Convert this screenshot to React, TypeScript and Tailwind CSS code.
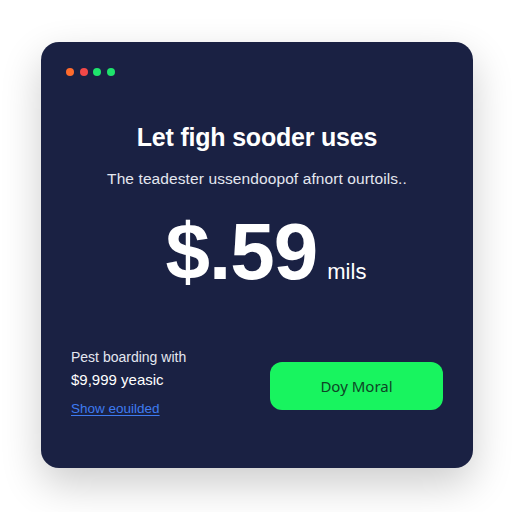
import React from "react"

const dots = ["bg-[#ff6b2c]", "bg-[#f34848]", "bg-[#1ee46c]", "bg-[#1ee46c]"]

export default function App() {
  return (
    <div className="w-[512px] h-[512px] bg-white flex items-start justify-center pt-[42px] pl-[2px] font-['Liberation_Sans',Arial,sans-serif]">
      <div className="w-[432px] h-[426px] rounded-[18px] bg-[#1a2143] shadow-[0_16px_40px_rgba(0,0,0,0.2)] flex flex-col px-[24px] pt-[26px]">
        <div className="flex gap-[5.5px] pl-[1px]">
          {dots.map((c, i) => (
            <span key={i} className={`w-[8px] h-[8px] rounded-full ${c}`} />
          ))}
        </div>

        <h1 className="mt-[46px] text-center text-white text-[25px] font-bold leading-[30px] tracking-[-0.2px]">
          Let figh sooder uses
        </h1>
        <p className="mt-[17px] text-center text-[#e4e7f0] text-[15.5px] leading-[20px] tracking-[0.1px]">
          The teadester ussendoopof afnort ourtoils..
        </p>

        <div className="mt-[19px] flex items-baseline justify-center pl-[18px]">
          <span className="text-white text-[80px] font-bold leading-[88px] tracking-[-1px]">$.59</span>
          <span className="ml-[10px] text-white text-[22px] leading-none">mils</span>
        </div>

        <div className="mt-[52px] flex items-start justify-between pl-[6px] pr-[6px]">
          <div className="flex flex-col">
            <span className="text-[#e4e7f0] text-[14px] leading-[18px]">Pest boarding with</span>
            <span className="mt-[4px] text-white text-[15px] leading-[20px]">$9,999 yeasic</span>
            <a className="mt-[10px] text-[#3e7bf0] text-[13.5px] leading-[18px] underline underline-offset-2">
              Show eouilded
            </a>
          </div>
          <button className="mt-[14px] w-[173px] h-[48px] rounded-[12px] bg-[#18f45f] text-[#0e4526] text-[15px] font-['Noto_Sans',sans-serif]">
            Doy Moral
          </button>
        </div>
      </div>
    </div>
  )
}
